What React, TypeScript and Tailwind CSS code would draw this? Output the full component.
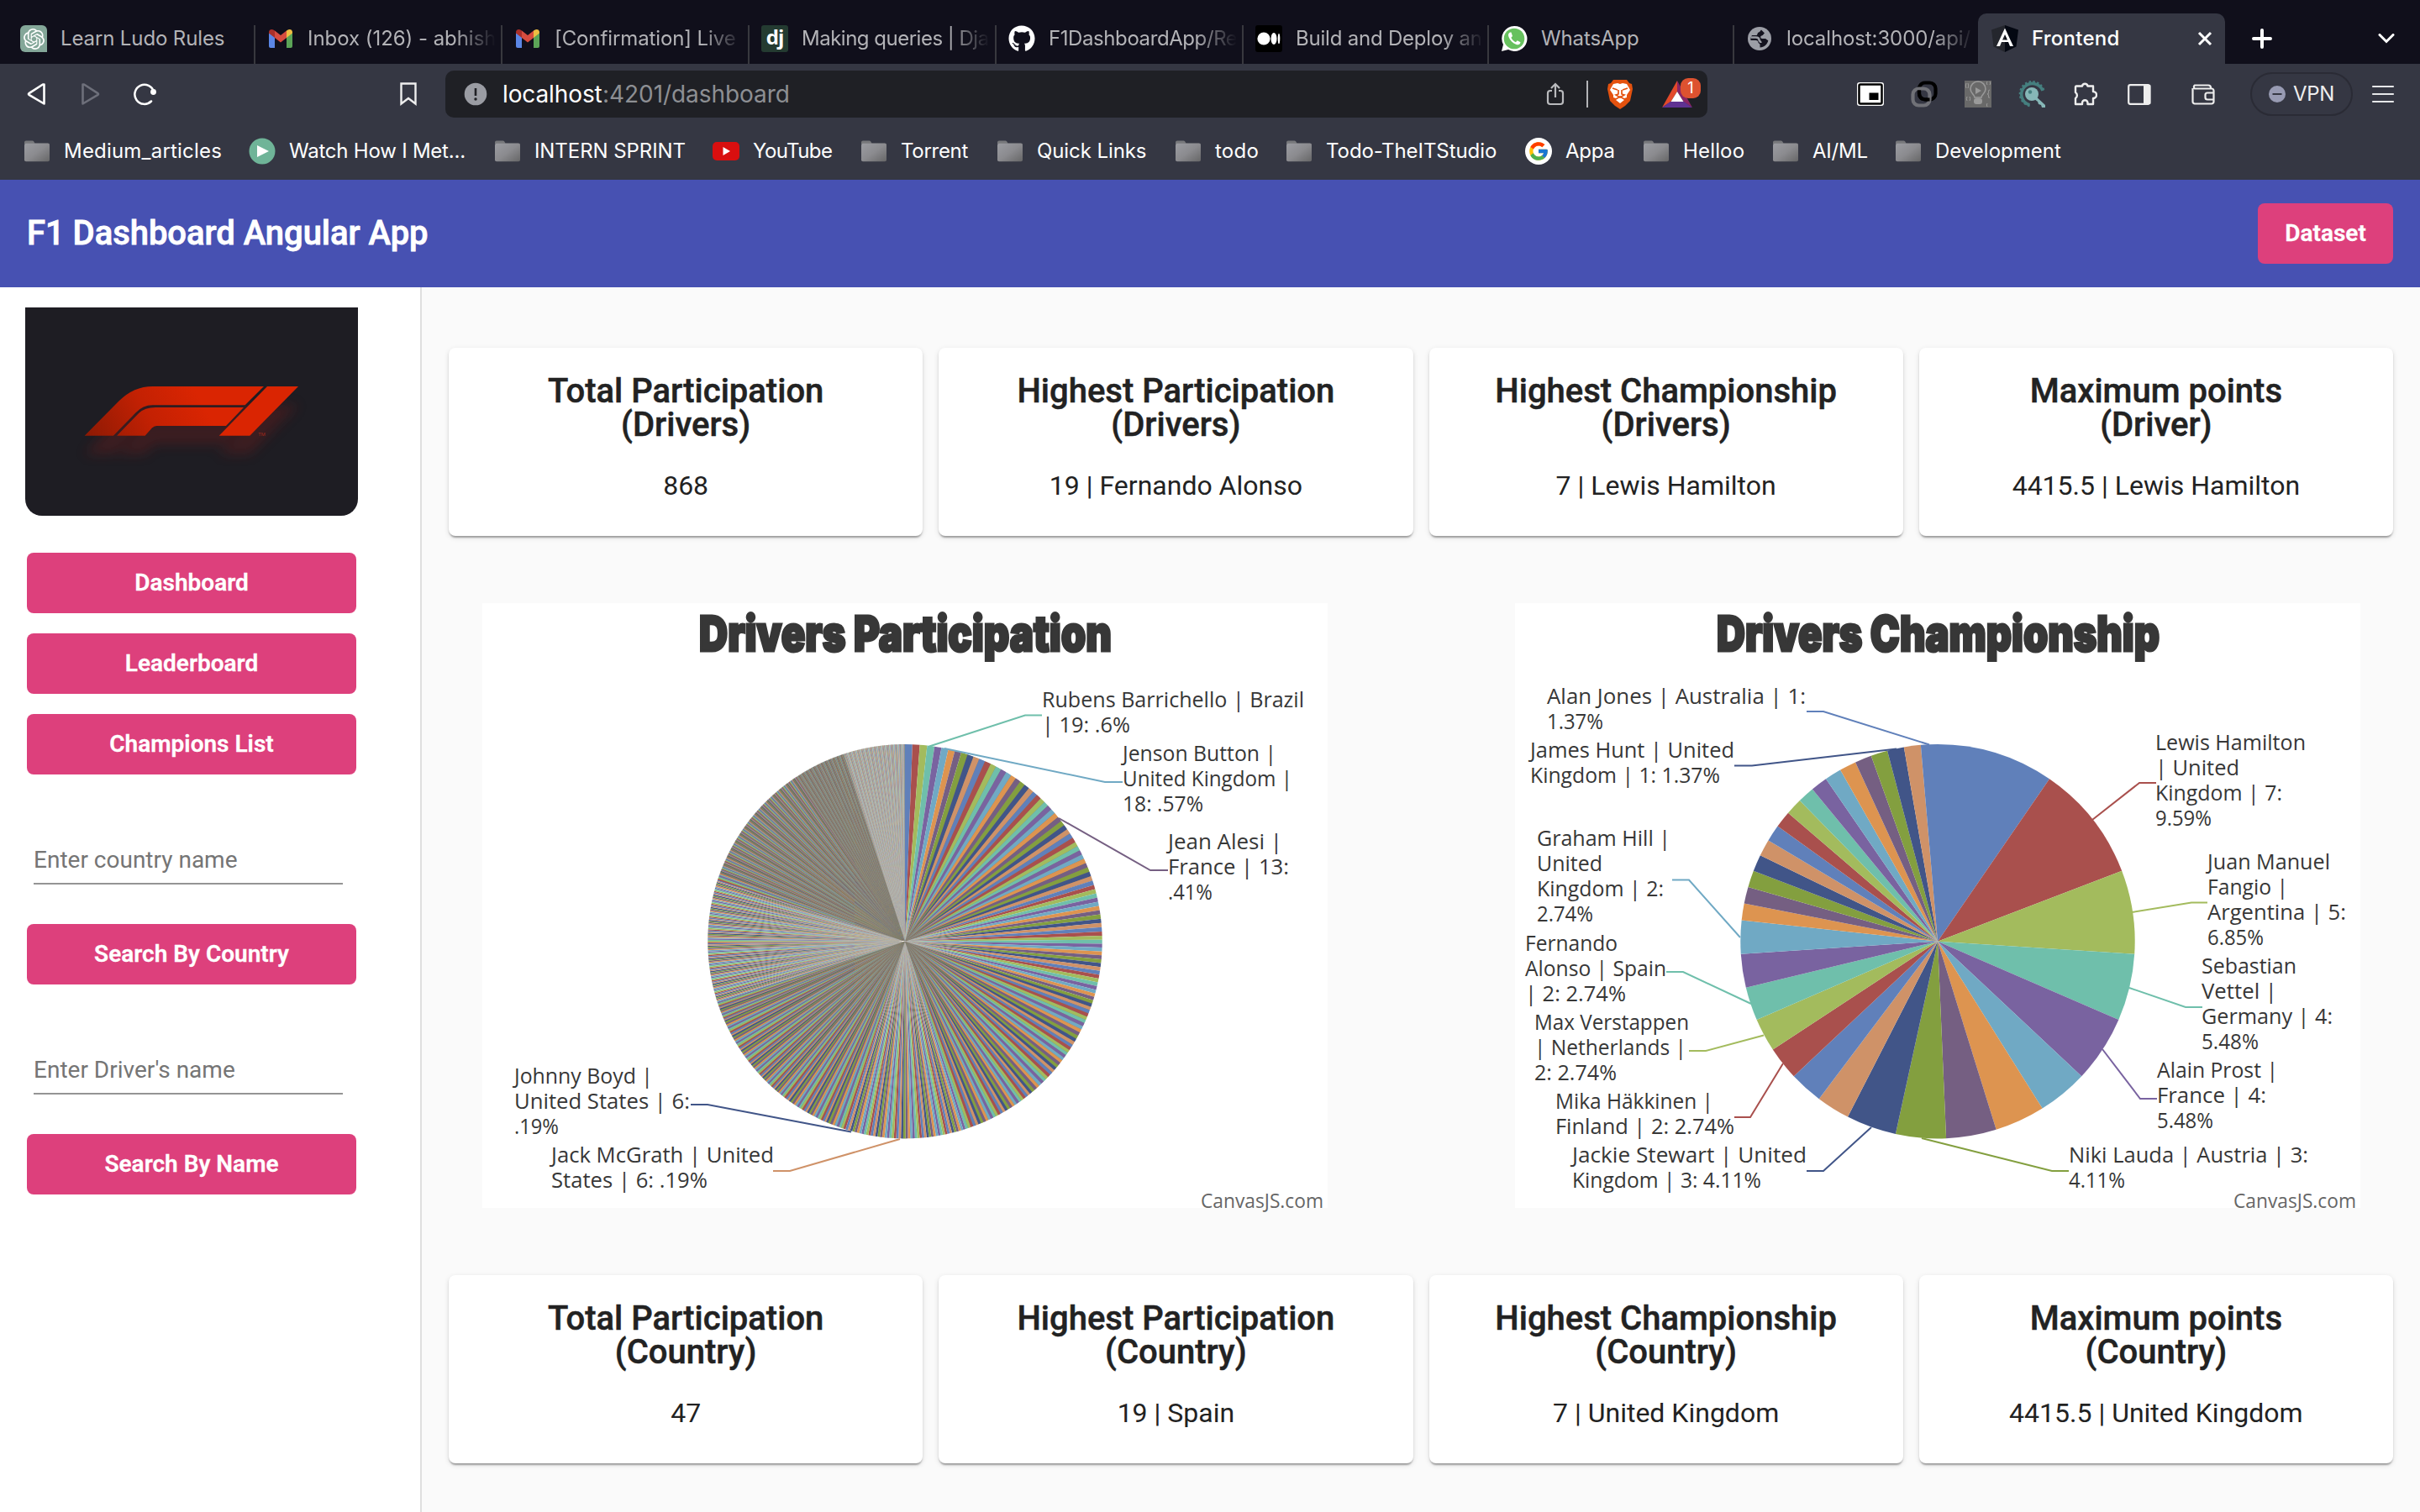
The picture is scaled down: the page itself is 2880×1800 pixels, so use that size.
import React, { useLayoutEffect, useRef, useState } from "react";
import { SiOpenai } from "react-icons/si";
import { FaGithub } from "react-icons/fa";
import { FcGoogle } from "react-icons/fc";

/* Text tracked so that it fills a given width. */
function Fit({ w, children, className = "" }: { w: number; children: string; className?: string }) {
  const ref = useRef<HTMLSpanElement>(null);
  const [ls, setLs] = useState(0);
  useLayoutEffect(() => {
    if (ref.current) setLs((w - ref.current.offsetWidth) / children.length);
  }, []);
  return (
    <span className={"block shrink-0 whitespace-nowrap " + className} style={{ width: w }}>
      <span ref={ref} className="inline-block" style={{ letterSpacing: ls }}>
        {children}
      </span>
    </span>
  );
}

/* ---------- tab icons ---------- */
const ChatIcon = () => (
  <span className="flex size-8 items-center justify-center rounded-l-md rounded-tr-md bg-[#84a799] text-white">
    <SiOpenai size={25} />
  </span>
);
const Gmail = () => (
  <svg viewBox="0 0 32 32" className="size-8">
    <path d="M2 9v16a2 2 0 0 0 2 2h5V14z" fill="#5b86e5" />
    <path d="M30 9v16a2 2 0 0 1-2 2h-5V14z" fill="#5ba457" />
    <path d="M2 9.500V8.200C2 5 5.500 4 7.800 5.700L9 6.600V15z" fill="#a9302a" />
    <path d="M30 9.500V8.200C30 5 26.500 4 24.200 5.700L23 6.600V15z" fill="#eebd42" />
    <path d="M9 6.600l7 5.300 7-5.300V15l-7 5.400L9 15z" fill="#d64c3f" />
  </svg>
);
const Django = () => (
  <span className="flex size-8 items-center justify-center rounded-[3px] bg-[#243b31] pb-1 font-['Open_Sans',sans-serif] text-[24px] leading-none font-bold tracking-[-1px] text-white">
    dj
  </span>
);
const MediumIcon = () => (
  <svg viewBox="0 0 32 32" className="size-8">
    <rect width="32" height="32" rx="3" fill="#000" />
    <circle cx="10" cy="16" r="7.600" fill="#fff" />
    <ellipse cx="22" cy="16" rx="3.500" ry="7" fill="#fff" />
    <ellipse cx="28" cy="16" rx="1.300" ry="6.300" fill="#fff" />
  </svg>
);
const Whats = () => (
  <svg viewBox="0 0 32 32" className="size-8">
    <path d="M16 1a15 15 0 0 0-13 22L1 31l8-2A15 15 0 1 0 16 1z" fill="#fff" />
    <circle cx="16" cy="16" r="12.300" fill="#67c15e" />
    <path d="M11 8.500c-2 1-2.500 3-1.500 5.500 1.700 4.300 4.700 7.500 9 9 2.500.9 4.700 0 5-2.700l-3.800-2-1.800 2c-2.500-1-4.500-3-5.500-5.500l1.600-1.800L12.500 8.500z" fill="#fff" />
  </svg>
);
const Globe = () => (
  <svg viewBox="0 0 32 32" className="size-8">
    <circle cx="16" cy="16" r="14" fill="#9c9ea6" />
    <path d="M18 5.500c-1 1-1.500 2.500-3 3-2 .5-1 3-2.500 3.500H7c-1.500 2-2 4-1.500 6h6c2 0 3 1 3 2.500s2 1 2 2.500v3.500c5 0 9-4 9.800-8.500-1.300 0-2-1.500-3.300-2H19c-2 0-2.500-3-.5-3.500s2-2 3.500-3z" fill="#14131f" />
    <path d="M5.500 14.500h6c3 0 4 1.500 4 3s2 1.500 2 3.500" stroke="#9c9ea6" strokeWidth="2.500" fill="none" />
  </svg>
);
const AngularIcon = () => (
  <svg viewBox="0 0 32 32" className="size-8 shrink-0">
    <path d="M16 0L0 5.500 2.500 25.500 16 32z" fill="#24262d" />
    <path d="M16 0l16 5.500L29.500 25.500 16 32z" fill="#040812" />
    <path fillRule="evenodd" d="M16 3.500L6 25h4l2-5h8l2 5h4zm0 7.500l3 6.500h-6z" fill="#fff" />
  </svg>
);

const tabs = [
  { icon: <ChatIcon />, label: "Learn Ludo Rules", w: 195, fade: false, tab: "w-[294px]" },
  { icon: <Gmail />, label: "Inbox (126) - abhish", w: 224, fade: true, tab: "w-[294px]" },
  { icon: <Gmail />, label: "[Confirmation] Live", w: 216, fade: true, tab: "w-[294px]" },
  { icon: <Django />, label: "Making queries | Dja", w: 223, fade: true, tab: "w-[294px]" },
  { icon: <FaGithub size={32} color="#fff" />, label: "F1DashboardApp/Re", w: 224, fade: true, tab: "w-[294px]" },
  { icon: <MediumIcon />, label: "Build and Deploy an", w: 222, fade: true, tab: "w-[292px]" },
  { icon: <Whats />, label: "WhatsApp", w: 117, fade: false, tab: "w-[292px]" },
  { icon: <Globe />, label: "localhost:3000/api/", w: 219, fade: true, tab: "w-[290px]" },
];

function TabStrip() {
  return (
    <div className="flex h-[76px] items-end bg-[#100f1b] pl-[10px] text-[24px] text-[#b3b3b7]">
      {tabs.map((t, i) => (
        <div key={i} className={"flex h-[60px] shrink-0 items-end " + t.tab}>
          <div className="flex h-[60px] flex-1 items-center gap-4 pl-[14px]">
            <span className="shrink-0">{t.icon}</span>
            <span
              className={
                "block w-[224px] " +
                (t.fade ? "[mask-image:linear-gradient(90deg,#000_78%,transparent_100%)]" : "")
              }
            >
              <Fit w={t.w}>{t.label}</Fit>
            </span>
          </div>
          {i < 7 && <div className="h-[46px] w-[2px] bg-[#38383e]" />}
        </div>
      ))}
      <div className="flex h-[60px] w-[294px] shrink-0 items-center gap-4 rounded-t-[10px] bg-[#353743] pr-4 pl-4">
        <AngularIcon />
        <Fit w={105} className="font-medium text-white">Frontend</Fit>
        <svg viewBox="0 0 16 16" className="ml-auto size-4 overflow-visible" stroke="#fff" strokeWidth="3">
          <path d="M1 1l14 14M15 1L1 15" />
        </svg>
      </div>
      <div className="flex h-[60px] flex-1 items-center justify-between pr-[30px] pl-8">
        <svg viewBox="0 0 24 24" className="size-6" stroke="#fff" strokeWidth="4" strokeLinecap="round">
          <path d="M2 12h20M12 2v20" />
        </svg>
        <svg viewBox="0 0 20 12" className="h-3 w-5" fill="none" stroke="#fff" strokeWidth="3" strokeLinecap="round">
          <path d="M2 1.500l8 8 8-8" />
        </svg>
      </div>
    </div>
  );
}

/* ---------- toolbar ---------- */
function Toolbar() {
  return (
    <div className="flex h-[72px] items-center bg-[#353743] pr-[30px] pl-[32px]">
      <svg viewBox="0 0 24 28" className="h-7 w-6" fill="none" stroke="#fff" strokeWidth="2.600" strokeLinejoin="round">
        <path d="M20.500 2.500v23L2.500 14.800q-1-.8 0-1.600L19 2.500z" />
      </svg>
      <svg viewBox="0 0 24 28" className="ml-10 h-7 w-6" fill="none" stroke="#6d6f7a" strokeWidth="2.600" strokeLinejoin="round">
        <path d="M2.500 2.500v23l18-10.700q1-.8 0-1.600L4 2.500z" />
      </svg>
      <svg viewBox="0 0 28 28" className="ml-[38px] size-7" fill="none" stroke="#fff" strokeWidth="2.500" strokeLinecap="round">
        <path d="M22 22.500A11.500 11.500 0 1 1 25 11.500" />
        <circle cx="24.500" cy="11.500" r="2.200" fill="#fff" stroke="#fff" />
      </svg>
      <svg viewBox="0 0 20 28" className="ml-[290px] h-7 w-5" fill="none" stroke="#eee" strokeWidth="2.400">
        <path d="M1.500 1.500h17v24L10 19l-8.500 6.500z" />
      </svg>
      <div className="ml-[34px] flex h-14 w-[1502px] items-center rounded-[10px] bg-[#1f2025] pl-[22px]">
        <svg viewBox="0 0 28 28" className="size-7">
          <circle cx="14" cy="14" r="13.300" fill="#9a9ca3" />
          <path d="M14 7v9" stroke="#1f2025" strokeWidth="2.600" />
          <circle cx="14" cy="20" r="1.700" fill="#1f2025" />
        </svg>
        <div className="ml-[18px] flex text-[28px]">
          <Fit w={119} className="text-white">localhost</Fit>
          <Fit w={223} className="text-[#8d8f93]">:4201/dashboard</Fit>
        </div>
        <svg viewBox="0 0 22 28" className="ml-auto h-7 w-[22px]" fill="none" stroke="#b9babd" strokeWidth="2.200">
          <path d="M7 10H5a3 3 0 0 0-3 3v10a3 3 0 0 0 3 3h12a3 3 0 0 0 3-3V13a3 3 0 0 0-3-3h-2M11 18V2M6 7l5-5 5 5" />
        </svg>
        <div className="ml-[26px] h-8 w-[2px] bg-[#b4b5b8]" />
        <svg viewBox="0 0 32 36" className="ml-[22px] h-9 w-8">
          <path d="M8 1h16l3 4 3 1 1 6-3 14-6 6-6 4-6-4-6-6L1 12l1-6 3-1z" fill="#e4520f" />
          <path d="M8 6l5-1 3 1 3-1 5 1 4 7-4 6v3l-3 1-5-3-5 3-3-1v-3l-4-6z" fill="#fff" />
          <path d="M16 22l5 3-5 4-5-4z" fill="#fff" />
          <path d="M7 11l6 2M25 11l-6 2M14 13v5l-3 1 5 3 5-3-3-1v-5" fill="none" stroke="#e4520f" strokeWidth="1.700" />
        </svg>
        <span className="relative mr-[18px] ml-[34px] block h-8 w-9">
          <svg viewBox="0 0 36 32" className="h-8 w-9">
            <path d="M18 0L0 32l10.500-7L18 13z" fill="#e2492a" />
            <path d="M18 0l18 32-10.500-7L18 13z" fill="#8a2565" />
            <path d="M0 32h36l-10-7H10z" fill="#5f3292" />
            <path d="M18 13l7.500 12h-15z" fill="#fff" />
          </svg>
          <span className="absolute -top-[3px] left-[22px] flex size-6 items-center justify-center rounded-[9px] bg-[#dd5230] text-[18px] leading-none text-white">
            1
          </span>
        </span>
      </div>
      <svg viewBox="0 0 32 28" className="ml-[178px] h-7 w-8">
        <rect width="32" height="28" rx="3" fill="#fff" />
        <rect x="2.500" y="2.500" width="27" height="23" rx="1.500" fill="#fff" stroke="#000" strokeWidth="2.500" />
        <rect x="14.500" y="12.500" width="11" height="8.500" fill="#000" />
      </svg>
      <svg viewBox="0 0 32 32" className="ml-8 size-8" fill="none" strokeWidth="4.200">
        <rect x="10" y="2.500" width="19.500" height="20" rx="7" stroke="#000" />
        <rect x="2.500" y="9.500" width="20" height="20" rx="7" stroke="#707177" />
        <path d="M10 11.500v4a7 7 0 0 0 7 7h5.500" stroke="#000" />
      </svg>
      <svg viewBox="0 0 32 32" className="ml-8 size-8" fill="none" stroke="#9a9a9a" strokeWidth="1.600">
        <rect width="32" height="32" fill="#696969" stroke="none" />
        <path d="M12 20c0-3-5-5-5-10a9 9 0 0 1 18 0c0 5-5 7-5 10z" />
        <path d="M13 8v8l7-4z" fill="#9a9a9a" stroke="none" />
        <rect x="11" y="21" width="10" height="7" rx="3" fill="#9a9a9a" stroke="none" />
        <path d="M2 3q-1.500 3 0 6M4 3q1.500 3 0 6M3 19q-1.500 3 0 5M6 19q1.500 3 0 5M30 11q-2 0-1.500 2.500T27 16q2 0 1.500 2.500T30 20M27 1q-1.500 2 0 4M30 1q1.500 2 0 4M27 27q-1.500 2 0 4" strokeWidth="1" />
      </svg>
      <svg viewBox="0 0 32 32" className="ml-8 size-8" fill="none">
        <path d="M13.500 29A13 13 0 1 1 29 12" stroke="#457f7f" strokeWidth="3.500" />
        <path d="M13.500 30A14.500 14.500 0 1 1 30.500 12" stroke="#457f7f" strokeWidth="2.600" strokeDasharray="2.400 2.400" />
        <circle cx="16" cy="16" r="8" fill="#86b7b7" />
        <circle cx="14" cy="13.500" r="2.200" fill="#457f7f" />
        <path d="M19 17l13 12v3h-4l-1-3-3-1-1-3-4-3z" fill="#86b7b7" />
      </svg>
      <svg viewBox="0 0 28 28" className="ml-[34px] size-7" fill="none" stroke="#eee" strokeWidth="2.400" strokeLinejoin="round">
        <path d="M3 4.500h7a3.300 3.300 0 0 1 6.500 0H23v6.500a3.800 3.800 0 0 1 0 8V26h-6.500v-1.500a3.200 3.200 0 0 0-6.500 0V26H2v-7a4.200 4.200 0 0 0 0-7V6q0-1.500 1-1.500z" />
      </svg>
      <svg viewBox="0 0 28 25" className="ml-9 h-[25px] w-7">
        <rect x="1.200" y="1.200" width="25" height="22.600" rx="2" fill="none" stroke="#eee" strokeWidth="2.200" />
        <rect x="19" y="1" width="8.500" height="23" rx="1" fill="#eee" />
      </svg>
      <svg viewBox="0 0 28 25" className="ml-12 h-[25px] w-7" fill="none" stroke="#eee" strokeWidth="2.200">
        <path d="M1.500 5V21a2.500 2.500 0 0 0 2.500 2.500h20a2.500 2.500 0 0 0 2.500-2.500V8A2.500 2.500 0 0 0 24 5.500H4A2.300 2.300 0 0 1 4 1.500h16a3 3 0 0 1 3 3M27 10.500H19a2.500 2.500 0 0 0-2.500 2.500v3a2.500 2.500 0 0 0 2.500 2.500h8" />
      </svg>
      <div className="ml-[42px] flex h-[52px] w-[122px] items-center rounded-full border-2 border-[#2a2b35] pl-5 text-[24px] text-[#eee]">
        <svg viewBox="0 0 20 20" className="mr-[9px] size-5">
          <circle cx="10" cy="10" r="10" fill="#989bb3" />
          <path d="M4.500 10h11" stroke="#353743" strokeWidth="2" />
        </svg>
        <Fit w={49}>VPN</Fit>
      </div>
      <svg viewBox="0 0 28 22" className="ml-auto h-[22px] w-7" stroke="#e6e7e9" strokeWidth="2.200" strokeLinecap="round">
        <path d="M2 2h24M2 11h24M2 20h24" />
      </svg>
    </div>
  );
}

const Folder = () => (
  <svg viewBox="0 0 32 28" className="h-7 w-8">
    <defs>
      <linearGradient id="fold" x1="0" y1="0" x2="1" y2="1">
        <stop offset="0" stopColor="#9b9ca2" />
        <stop offset=".5" stopColor="#8b8b8f" />
        <stop offset="1" stopColor="#666667" />
      </linearGradient>
    </defs>
    <path d="M1 5.500V3.500a2 2 0 0 1 2-2h7.500a2 2 0 0 1 1.600.8L13.500 4.500H29a2 2 0 0 1 2 2z" fill="#77787b" />
    <rect x="1" y="4.800" width="30" height="21.500" rx="2" fill="url(#fold)" />
  </svg>
);
const Play = () => (
  <svg viewBox="0 0 32 32" className="size-8">
    <circle cx="16" cy="16" r="15.500" fill="#6fb498" />
    <path d="M10 9v14l14-7z" fill="#fff" />
  </svg>
);
const YT = () => (
  <svg viewBox="0 0 32 32" className="size-8">
    <rect y="5" width="32" height="22" rx="5" fill="#d90f0f" />
    <path d="M12.500 11v10l8.500-5z" fill="#fff" />
  </svg>
);
const G = () => (
  <span className="flex size-8 items-center justify-center rounded-full bg-white">
    <FcGoogle size={26} />
  </span>
);
const marks = [
  { i: <Folder />, t: "Medium_articles", w: 188, g: "mr-[32px]" },
  { i: <Play />, t: "Watch How I Met...", w: 210, g: "mr-[34px]" },
  { i: <Folder />, t: "INTERN SPRINT", w: 180, g: "mr-[32px]" },
  { i: <YT />, t: "YouTube", w: 94, g: "mr-[34px]" },
  { i: <Folder />, t: "Torrent", w: 80, g: "mr-[34px]" },
  { i: <Folder />, t: "Quick Links", w: 130, g: "mr-[34px]" },
  { i: <Folder />, t: "todo", w: 52, g: "mr-[32px]" },
  { i: <Folder />, t: "Todo-TheITStudio", w: 203, g: "mr-[34px]" },
  { i: <G />, t: "Appa", w: 59, g: "mr-[33px]" },
  { i: <Folder />, t: "Helloo", w: 73, g: "mr-[33px]" },
  { i: <Folder />, t: "AI/ML", w: 66, g: "mr-[32px]" },
  { i: <Folder />, t: "Development", w: 150, g: "" },
];
const Bookmarks = () => (
  <div className="flex h-[66px] items-center bg-[#353743] pb-[2px] pl-7 text-[24px] text-white">
    {marks.map((m, k) => (
      <div key={k} className={"flex shrink-0 items-center gap-4 " + m.g}>
        {m.i}
        <Fit w={m.w}>{m.t}</Fit>
      </div>
    ))}
  </div>
);

/* ---------- sidebar ---------- */
const F1Logo = () => (
  <svg viewBox="0 0 396 248" className="h-[248px] w-[396px] rounded-b-[20px] bg-[#1e1d23]">
    <defs>
      <linearGradient id="red" gradientUnits="userSpaceOnUse" x1="60" y1="260" x2="420" y2="60">
        <stop offset="0" stopColor="#8f1a04" />
        <stop offset=".55" stopColor="#c42103" />
        <stop offset="1" stopColor="#da2502" />
      </linearGradient>
      <filter id="soft" x="-20%" y="-60%" width="140%" height="220%">
        <feGaussianBlur stdDeviation="20" />
      </filter>
      <g id="f1">
        <path d="M32 236L155 112Q207 60 275 60H672L605 127H275Q240 127 215 154L135 236z" />
        <path d="M147 236L225 156Q246 135 285 135H600L537 201H290Q278 201 268 214L248 236z" />
        <path d="M512 236L684 60H795L622 236z" />
      </g>
    </defs>
    <g transform="translate(60 74) scale(.33333)">
      <use href="#f1" y="66" fill="#6a1a1a" opacity=".4" filter="url(#soft)" />
      <use href="#f1" fill="#1e1d23" />
      <use href="#f1" fill="url(#red)" />
      <text x="652" y="236" fontFamily="Roboto, sans-serif" fontSize="17" fill="#a32a1c">TM</text>
    </g>
  </svg>
);

const Btn = ({ children, mt }: { children: string; mt: string }) => (
  <button className={"flex h-[72px] w-[392px] items-center justify-center rounded-[8px] bg-[#dd407c] text-[28px] font-semibold text-white [-webkit-text-stroke:0.3px_#fff] " + mt}>
    {children}
  </button>
);

const Field = ({ children }: { children: string }) => (
  <div className="mt-[90px] ml-2 flex h-[41px] w-[368px] items-center border-b-2 border-[#949494] pb-[15px] text-[28px] leading-[28px] text-[#757575]">
    <span className="whitespace-nowrap">{children}</span>
  </div>
);

const Sidebar = () => (
  <aside className="flex w-[502px] shrink-0 flex-col border-r-2 border-[#dfdfdf] bg-white pt-6 pl-[32px]">
    <div className="-ml-[2px]">
      <F1Logo />
    </div>
    <Btn mt="mt-[44px]">Dashboard</Btn>
    <Btn mt="mt-6">Leaderboard</Btn>
    <Btn mt="mt-6">Champions List</Btn>
    <Field>Enter country name</Field>
    <Btn mt="mt-[47px]">Search By Country</Btn>
    <Field>Enter Driver's name</Field>
    <Btn mt="mt-[47px]">Search By Name</Btn>
  </aside>
);

/* ---------- cards ---------- */
const Card = ({ a, b, v }: { a: string; b: string; v: string }) => (
  <div className="flex h-[224px] flex-col items-center rounded-[8px] bg-white pt-8 text-[#222] shadow-[0_4px_2px_-2px_rgba(0,0,0,0.2),0_2px_2px_0_rgba(0,0,0,0.14),0_2px_6px_0_rgba(0,0,0,0.12)]">
    <div className="text-center text-[40px] leading-[40px] font-medium whitespace-nowrap [-webkit-text-stroke:0.5px_#222]">
      {a}
      <br />
      {b}
    </div>
    <div className="mt-8 text-[32px] leading-[40px] whitespace-nowrap">{v}</div>
  </div>
);
const Cards = ({ rows, k }: { rows: string[][]; k: string }) => (
  <div className={"grid grid-cols-4 gap-x-[19px] " + k}>
    {rows.map((r, i) => (
      <Card key={i} a={r[0]} b={r[1]} v={r[2]} />
    ))}
  </div>
);

/* ---------- charts ---------- */
const P = ["#6080ba", "#a9504d", "#a3bb5d", "#6fbfab", "#7963a0", "#70a9c4", "#dd9450", "#755f82", "#839f3f", "#415588", "#cf9268"];

const rep = (pairs: number[][]) => pairs.flatMap(([v, n]) => Array(n).fill(v) as number[]);
const participation = rep([
  [19, 4], [18, 2], [17, 3], [16, 4], [15, 4], [14, 5], [13, 13], [12, 10], [11, 12], [10, 14], [9, 17],
  [8, 20], [7, 28], [6, 60], [5, 26], [4, 62], [3, 130], [2, 160], [1, 294],
]);
const championships = rep([[7, 2], [5, 1], [4, 2], [3, 5], [2, 7], [1, 17]]);

/* Pie sector between two clockwise angles, in turns from twelve o'clock. */
const sector = (cx: number, cy: number, r: number, a: number, b: number) => {
  const pt = (t: number) =>
    (cx + r * Math.sin(t * Math.PI * 2)).toFixed(3) + " " + (cy - r * Math.cos(t * Math.PI * 2)).toFixed(3);
  return `M${cx} ${cy}L${pt(a)}A${r} ${r} 0 0 1 ${pt(b)}z`;
};

function Slices({ data, cx, cy, r }: { data: number[]; cx: number; cy: number; r: number }) {
  const total = data.reduce((a, b) => a + b, 0);
  let acc = 0;
  return (
    <g>
      {data.map((v, i) => {
        const s = acc;
        acc += v;
        return <path key={i} fill={P[i % 11]} d={sector(cx, cy, r, s / total, acc / total)} />;
      })}
    </g>
  );
}

/* Diagonal quadrants, whose thin slices blend darker than those along the axes. */
const Shade = () => (
  <g fill="#857d6c">
    {[0, 1, 2, 3].map((q) => (
      <path key={q} d={sector(1077, 1120.7, 234.3, 0.05 + q / 4, 0.2 + q / 4)} />
    ))}
  </g>
);

type Label = { x: number; y: number; lines: [string, number][]; c: number; p: string };

const Labels = ({ items }: { items: Label[] }) => (
  <g fontFamily="'Open Sans', sans-serif" fontSize="25.500" fill="#373737">
    {items.map((l, i) => (
      <g key={i}>
        <polyline points={l.p} fill="none" stroke={P[l.c]} strokeWidth="2" />
        {l.lines.map(([t, end], j) => (
          <text key={j} x={l.x} y={l.y - 0.8 + j * 30} textLength={end - l.x} lengthAdjust="spacingAndGlyphs">
            {t}
          </text>
        ))}
      </g>
    ))}
  </g>
);

const chart1: Label[] = [
  { x: 1240, y: 842.5, c: 3, p: "1240,851.500 1220,851.500 1106,888.500", lines: [["Rubens Barrichello | Brazil", 1552], ["| 19: .6%", 1345]] },
  { x: 1336, y: 907, c: 5, p: "1336,931 1315,931 1124,891", lines: [["Jenson Button |", 1519], ["United Kingdom |", 1538], ["18: .57%", 1432]] },
  { x: 1390, y: 1012, c: 7, p: "1390,1036 1369,1036 1260,974", lines: [["Jean Alesi |", 1526], ["France | 13:", 1534], [".41%", 1443]] },
  { x: 612, y: 1290.5, c: 9, p: "822,1315 842,1315 1013,1347.500", lines: [["Johnny Boyd |", 777], ["United States | 6:", 821], [".19%", 665]] },
  { x: 656, y: 1384.5, c: 10, p: "920,1394 940,1394 1071,1356", lines: [["Jack McGrath | United", 921], ["States | 6: .19%", 842]] },
];
const chart2: Label[] = [
  { x: 1841, y: 838.5, c: 0, p: "2150,847 2170,847 2296,886.500", lines: [["Alan Jones | Australia | 1:", 2149], ["1.37%", 1908]] },
  { x: 1821, y: 902.5, c: 9, p: "2064,911.500 2085,911.500 2257,891.500", lines: [["James Hunt | United", 2064], ["Kingdom | 1: 1.37%", 2047]] },
  { x: 1829, y: 1008, c: 5, p: "1990,1047.500 2010,1047.500 2071,1116", lines: [["Graham Hill |", 1988], ["United", 1907], ["Kingdom | 2:", 1980], ["2.74%", 1896]] },
  { x: 1815, y: 1132.5, c: 3, p: "1983,1157 2003,1157 2084,1195", lines: [["Fernando", 1925], ["Alonso | Spain", 1983], ["| 2: 2.74%", 1935]] },
  { x: 1826, y: 1226.5, c: 2, p: "2010,1251 2030,1251 2099,1232.500", lines: [["Max Verstappen", 2010], ["| Netherlands |", 2007], ["2: 2.74%", 1924]] },
  { x: 1851, y: 1320.5, c: 1, p: "2064,1330 2083,1330 2122,1266", lines: [["Mika Häkkinen |", 2039], ["Finland | 2: 2.74%", 2064]] },
  { x: 1871, y: 1384.5, c: 9, p: "2150,1394 2170,1394 2227,1342", lines: [["Jackie Stewart | United", 2150], ["Kingdom | 3: 4.11%", 2096]] },
  { x: 2565, y: 893.5, c: 1, p: "2566,932 2546,932 2490,976", lines: [["Lewis Hamilton", 2744], ["| United", 2665], ["Kingdom | 7:", 2716], ["9.59%", 2632]] },
  { x: 2627, y: 1035.5, c: 2, p: "2627,1074.500 2608,1074.500 2537,1086", lines: [["Juan Manuel", 2773], ["Fangio |", 2723], ["Argentina | 5:", 2792], ["6.85%", 2694]] },
  { x: 2620, y: 1159.5, c: 3, p: "2621,1199 2601,1199 2534,1176", lines: [["Sebastian", 2733], ["Vettel |", 2710], ["Germany | 4:", 2776], ["5.48%", 2688]] },
  { x: 2567, y: 1283.5, c: 4, p: "2567,1308 2547,1308 2502,1249", lines: [["Alain Prost |", 2711], ["France | 4:", 2697], ["5.48%", 2634]] },
  { x: 2462, y: 1384.5, c: 8, p: "2462,1394 2442,1394 2287,1355", lines: [["Niki Lauda | Austria | 3:", 2747], ["4.11%", 2529]] },
];

function Chart({ x0, title, tx, tw, data, cx, labels, children }: {
  x0: string; title: string; tx: number; tw: number; data: number[]; cx: number; labels: Label[]; children?: React.ReactNode;
}) {
  const left = Number(x0.split(" ")[0]);
  return (
    <svg viewBox={x0} className="h-[720px] w-[1006px] overflow-visible bg-white">
      <text x={tx} y="775" textLength={tw} lengthAdjust="spacingAndGlyphs" fontFamily="Inter, sans-serif" fontWeight="900" fontSize="58" fill="#373737" stroke="#373737" strokeWidth="3">
        {title}
      </text>
      {children}
      <Slices data={data} cx={cx} cy={1120.7} r={234.7} />
      <Labels items={labels} />
      <text x={left + 855} y="1438" textLength="146" lengthAdjust="spacingAndGlyphs" fontFamily="'Open Sans', sans-serif" fontSize="23" fill="#666">
        CanvasJS.com
      </text>
    </svg>
  );
}

export default function App() {
  return (
    <div className="flex h-[1800px] w-[2880px] flex-col overflow-hidden bg-[#fafafa] font-[Roboto,sans-serif]">
      <div className="font-[Inter,sans-serif]">
        <TabStrip />
        <Toolbar />
        <Bookmarks />
      </div>
      <header className="flex h-32 shrink-0 items-center justify-between bg-[#4751b2] px-8 text-white">
        <h1 className="text-[40px] font-medium [-webkit-text-stroke:0.8px_#fff]">
          <Fit w={478}>F1 Dashboard Angular App</Fit>
        </h1>
        <button className="flex h-[72px] w-[161px] items-center justify-center rounded-[8px] bg-[#dd407c] text-[28px] font-semibold [-webkit-text-stroke:0.3px_#fff]">
          Dataset
        </button>
      </header>
      <div className="flex flex-1">
        <Sidebar />
        <main className="flex flex-1 flex-col pr-8 pl-8">
          <Cards
            k="mt-[72px]"
            rows={[
              ["Total Participation", "(Drivers)", "868"],
              ["Highest Participation", "(Drivers)", "19 | Fernando Alonso"],
              ["Highest Championship", "(Drivers)", "7 | Lewis Hamilton"],
              ["Maximum points", "(Driver)", "4415.5 | Lewis Hamilton"],
            ]}
          />
          <div className="mt-20 flex h-[720px] justify-between pr-[39px] pl-[40px]">
            <Chart x0="574 718 1006 720" title="Drivers Participation" tx={832} tw={491} data={participation} cx={1077} labels={chart1}>
              <Shade />
            </Chart>
            <Chart x0="1803 718 1006 720" title="Drivers Championship" tx={2043} tw={527} data={championships} cx={2306} labels={chart2} />
          </div>
          <Cards
            k="mt-20"
            rows={[
              ["Total Participation", "(Country)", "47"],
              ["Highest Participation", "(Country)", "19 | Spain"],
              ["Highest Championship", "(Country)", "7 | United Kingdom"],
              ["Maximum points", "(Country)", "4415.5 | United Kingdom"],
            ]}
          />
        </main>
      </div>
    </div>
  );
}
